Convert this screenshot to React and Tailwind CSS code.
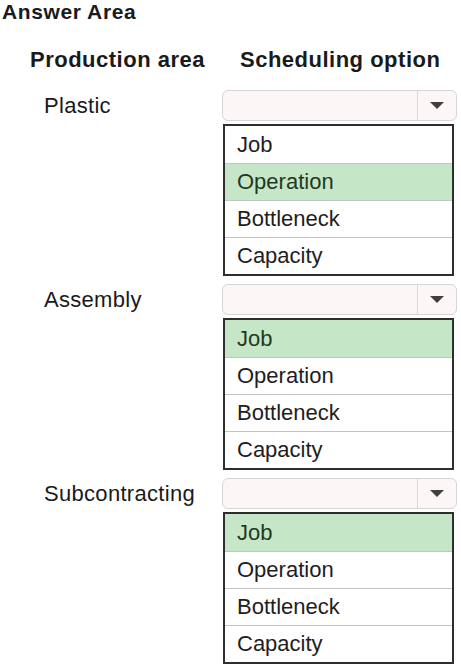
const OPTIONS = ['Job', 'Operation', 'Bottleneck', 'Capacity'];

const ROWS = [
  { label: 'Plastic', selected: 'Operation' },
  { label: 'Assembly', selected: 'Job' },
  { label: 'Subcontracting', selected: 'Job' },
];

function Dropdown({ selected }) {
  return (
    <div className="flex flex-col w-[235px]">
      {/* closed select box */}
      <div className="flex h-[31px] rounded-[6px] border border-[#d6d6d6] bg-[#fdf6f6]">
        <div className="flex-1" />
        <div className="w-[39px] border-l border-[#d9d9d9] flex items-center justify-center">
          <svg width="14" height="8" viewBox="0 0 14 8">
            <path d="M0 0 L14 0 L7 7 Z" fill="#3f3f3f" />
          </svg>
        </div>
      </div>

      {/* open option list */}
      <div className="mt-[3px] ml-px w-[231px] border-2 border-[#2e2e2e] bg-white flex flex-col">
        {OPTIONS.map((opt, i) => (
          <div
            key={opt}
            className={
              'h-[37px] pl-[12px] flex items-center text-[22px] leading-[36px] ' +
              (i > 0 ? 'border-t border-[#c4c4c4] ' : '') +
              (opt === selected ? 'bg-[#c6e6c8] text-[#1f3a22]' : 'text-[#1e1e1e]')
            }
          >
            {opt}
          </div>
        ))}
      </div>
    </div>
  );
}

export default function App() {
  return (
    <div
      className="w-[461px] h-[664px] bg-white overflow-hidden text-[#1a1a1a]"
      style={{ fontFamily: '"Liberation Sans", Arial, sans-serif' }}
    >
      <div className="pl-[2px] text-[21px] leading-[24px] font-bold tracking-[0.6px]">Answer Area</div>

      <div className="mt-[23px] flex text-[22px] leading-[26px] font-bold tracking-[0.5px]">
        <div className="w-[240px] pl-[30px]">Production area</div>
        <div>Scheduling option</div>
      </div>

      <div className="mt-[17px] flex flex-col gap-[8px]">
        {ROWS.map((row) => (
          <div key={row.label} className="flex">
            <div className="w-[222px] pl-[44px] pt-[3px] text-[22px] leading-[26px] tracking-[0.3px]">
              {row.label}
            </div>
            <Dropdown selected={row.selected} />
          </div>
        ))}
      </div>
    </div>
  );
}
